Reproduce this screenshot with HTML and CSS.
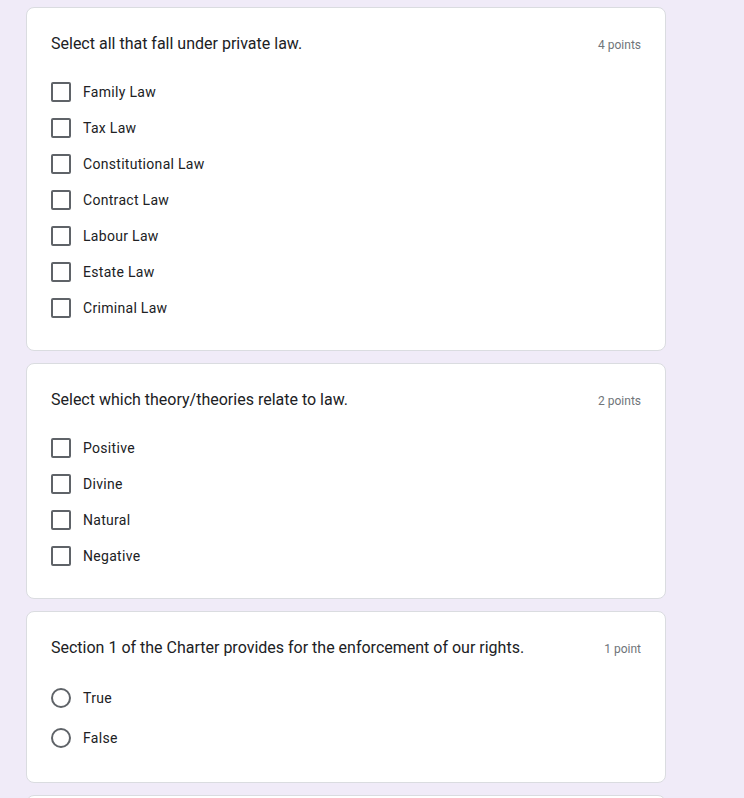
FILE: index.html
```html
<!DOCTYPE html>
<html>
<head>
<meta charset="utf-8">
<link rel="stylesheet" href="styles.css">
</head>
<body>
<div class="form">
  <div class="card">
    <div class="head"><div class="title">Select all that fall under private law.</div><div class="points">4 points</div></div>
    <div class="options">
      <div class="opt"><span class="box"></span><span class="label">Family Law</span></div>
      <div class="opt"><span class="box"></span><span class="label">Tax Law</span></div>
      <div class="opt"><span class="box"></span><span class="label">Constitutional Law</span></div>
      <div class="opt"><span class="box"></span><span class="label">Contract Law</span></div>
      <div class="opt"><span class="box"></span><span class="label">Labour Law</span></div>
      <div class="opt"><span class="box"></span><span class="label">Estate Law</span></div>
      <div class="opt"><span class="box"></span><span class="label">Criminal Law</span></div>
    </div>
  </div>
  <div class="card">
    <div class="head"><div class="title">Select which theory/theories relate to law.</div><div class="points">2 points</div></div>
    <div class="options">
      <div class="opt"><span class="box"></span><span class="label">Positive</span></div>
      <div class="opt"><span class="box"></span><span class="label">Divine</span></div>
      <div class="opt"><span class="box"></span><span class="label">Natural</span></div>
      <div class="opt"><span class="box"></span><span class="label">Negative</span></div>
    </div>
  </div>
  <div class="card">
    <div class="head"><div class="title">Section 1 of the Charter provides for the enforcement of our rights.</div><div class="points">1 point</div></div>
    <div class="options">
      <div class="opt radio"><span class="circle"></span><span class="label">True</span></div>
      <div class="opt radio"><span class="circle"></span><span class="label">False</span></div>
    </div>
  </div>
  <div class="card">
    <div class="head"><div class="title">&nbsp;</div><div class="points"></div></div>
  </div>
</div>
</body>
</html>
```
FILE: styles.css
```css
html, body {
  margin: 0;
  padding: 0;
  background: #f0ebf8;
}
body {
  font-family: Roboto, "Liberation Sans", Arial, sans-serif;
  color: #202124;
}
.form {
  display: flex;
  flex-direction: column;
  gap: 12px;
  padding: 7px 0 0 26px;
  width: 640px;
}
.card {
  background: #fff;
  border: 1px solid #dadce0;
  border-radius: 8px;
  padding: 24px;
}
.head {
  display: flex;
  justify-content: space-between;
  align-items: baseline;
  gap: 16px;
}
.title {
  font-size: 16px;
  line-height: 24px;
  letter-spacing: 0;
  color: #202124;
}
.points {
  font-size: 12px;
  color: #70757a;
  letter-spacing: 0;
  white-space: nowrap;
}
.options {
  display: flex;
  flex-direction: column;
  margin-top: 18px;
}
.opt {
  display: flex;
  align-items: center;
  height: 36px;
}
.opt.radio {
  height: 40px;
}
.box {
  width: 16px;
  height: 16px;
  border: 2px solid #5f6368;
  border-radius: 2px;
  flex: none;
}
.circle {
  width: 16px;
  height: 16px;
  border: 2px solid #5f6368;
  border-radius: 50%;
  flex: none;
}
.label {
  margin-left: 12px;
  font-size: 14px;
  letter-spacing: 0.3px;
  color: #202124;
}
```
